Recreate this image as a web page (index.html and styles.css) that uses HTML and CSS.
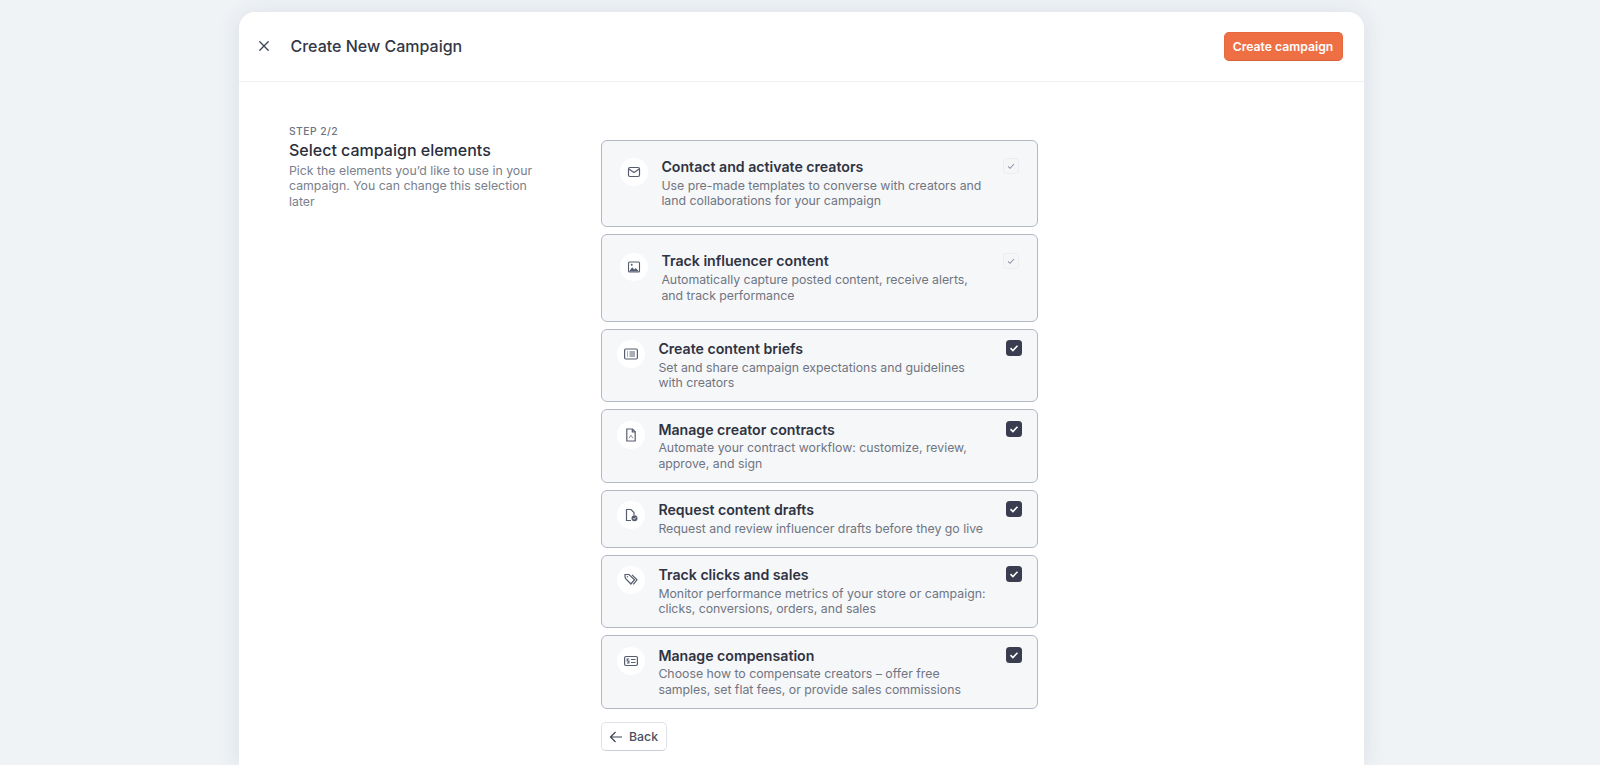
FILE: index.html
```html
<!DOCTYPE html>
<html lang="en">
<head>
<meta charset="utf-8">
<title>Create New Campaign</title>
<link rel="stylesheet" href="styles.css">
</head>
<body>
<main class="modal">
  <header class="modal-head">
    <button class="close" aria-label="Close">
      <svg viewBox="0 0 12 12" width="12" height="12"><path d="M1.800 1.800l8.400 8.400M10.200 1.800l-8.400 8.400" fill="none" stroke="#3b4252" stroke-width="1.300" stroke-linecap="round"/></svg>
    </button>
    <h1 class="modal-title">Create New Campaign</h1>
    <button class="primary">Create campaign</button>
  </header>
  <div class="modal-body">
    <aside class="intro">
      <div class="step">STEP 2/2</div>
      <h2 class="intro-title">Select campaign elements</h2>
      <p class="intro-text">Pick the elements you’d like to use in your campaign. You can change this selection later</p>
    </aside>
    <section class="elements">
      <article class="card card-large">
        <span class="icon"><svg viewBox="0 0 14 14"><rect x="1.500" y="2.500" width="11" height="9" rx="1.500" class="ln"/><path d="M1.800 4l5.200 3.600L12.200 4" class="ln"/></svg></span>
        <div class="copy"><h3>Contact and activate creators</h3><p>Use pre-made templates to converse with creators and land collaborations for your campaign</p></div>
        <span class="check check-locked"><svg viewBox="0 0 12 12"><path d="M3 6.300l2.100 2L9 4" fill="none" stroke="#8f95a3" stroke-width="1.100"/></svg></span>
      </article>
      <article class="card card-large">
        <span class="icon"><svg viewBox="0 0 14 14"><rect x="1.500" y="2" width="11" height="10" rx="1" fill="#fff" stroke="#565d6e" stroke-width="1.100"/><path d="M2 11.500l3.200-4.200 2 2.200 1.500-1.500 3.300 3.500z" fill="#565d6e"/><circle cx="4.700" cy="4.800" r="1" fill="#565d6e"/></svg></span>
        <div class="copy"><h3>Track influencer content</h3><p>Automatically capture posted content, receive alerts, and track performance</p></div>
        <span class="check check-locked"><svg viewBox="0 0 12 12"><path d="M3 6.300l2.100 2L9 4" fill="none" stroke="#8f95a3" stroke-width="1.100"/></svg></span>
      </article>
      <article class="card">
        <span class="icon"><svg viewBox="0 0 14 14"><rect x="0.600" y="2" width="12.800" height="10" rx="1.200" class="ln"/><path d="M3 5h1M5.500 5H11M3 7h1M5.500 7H11M3 9h1M5.500 9H11" class="ln"/></svg></span>
        <div class="copy"><h3>Create content briefs</h3><p>Set and share campaign expectations and guidelines with creators</p></div>
        <span class="check"><svg viewBox="0 0 12 12"><path d="M2.500 6.200l2.400 2.300L9.500 3.700" fill="none" stroke="#fff" stroke-width="1.600"/></svg></span>
      </article>
      <article class="card">
        <span class="icon"><svg viewBox="0 0 14 14"><path d="M2.800 1h5.700L11.200 3.700V13H2.800z" class="ln"/><path d="M8.300 1v2.900H11.200" class="ln"/><path d="M4.800 10.300c1-.2 1.300-3 2.100-3s.7 2.400 2.300 2.600" class="ln-thin"/></svg></span>
        <div class="copy"><h3>Manage creator contracts</h3><p>Automate your contract workflow: customize, review, approve, and sign</p></div>
        <span class="check"><svg viewBox="0 0 12 12"><path d="M2.500 6.200l2.400 2.300L9.500 3.700" fill="none" stroke="#fff" stroke-width="1.600"/></svg></span>
      </article>
      <article class="card">
        <span class="icon"><svg viewBox="0 0 14 14"><path d="M7 12.500H2.500V1.500H7L10 4.500V7" class="ln"/><circle cx="10.500" cy="10.300" r="3" fill="#565d6e"/><path d="M9.200 10.300l1 1 1.700-1.900" fill="none" stroke="#fff" stroke-width=".8"/></svg></span>
        <div class="copy"><h3>Request content drafts</h3><p>Request and review influencer drafts before they go live</p></div>
        <span class="check"><svg viewBox="0 0 12 12"><path d="M2.500 6.200l2.400 2.300L9.500 3.700" fill="none" stroke="#fff" stroke-width="1.600"/></svg></span>
      </article>
      <article class="card">
        <span class="icon"><svg viewBox="0 0 14 14"><path d="M1 3.600V1.500h4l5.500 5.200-3.600 4.300L1.500 5.500z" class="ln"/><path d="M8 1.800l5 5-3.700 4.600" class="ln"/><circle cx="3.500" cy="3.700" r=".7" fill="#565d6e"/></svg></span>
        <div class="copy"><h3>Track clicks and sales</h3><p>Monitor performance metrics of your store or campaign: clicks, conversions, orders, and sales</p></div>
        <span class="check"><svg viewBox="0 0 12 12"><path d="M2.500 6.200l2.400 2.300L9.500 3.700" fill="none" stroke="#fff" stroke-width="1.600"/></svg></span>
      </article>
      <article class="card">
        <span class="icon"><svg viewBox="0 0 14 14"><rect x="0.600" y="2.500" width="12.800" height="9" rx="1.400" class="ln"/><path d="M5.200 5h-2v2h1.700v2H2.900M7 5.500h4.500M7 8.500h4.500" class="ln"/></svg></span>
        <div class="copy"><h3>Manage compensation</h3><p>Choose how to compensate creators – offer free samples, set flat fees, or provide sales commissions</p></div>
        <span class="check"><svg viewBox="0 0 12 12"><path d="M2.500 6.200l2.400 2.300L9.500 3.700" fill="none" stroke="#fff" stroke-width="1.600"/></svg></span>
      </article>
      <button class="back">
        <svg viewBox="0 0 14 14" width="14" height="14"><path d="M13 7H1.500M6.500 2L1.500 7l5 5" fill="none" stroke="#3b4252" stroke-width="1.200"/></svg>
        Back
      </button>
    </section>
  </div>
</main>
</body>
</html>
```

FILE: styles.css
```css
* { box-sizing: border-box; }
html, body { height: 100%; }
body {
  margin: 0;
  height: 765px;
  overflow: hidden;
  background: #eff3f6;
  font-family: Inter, "Liberation Sans", sans-serif;
  color: #2f3342;
}
.modal {
  width: 1125px;
  height: 753px;
  margin: 11.500px 0 0 238.500px;
  background: #fff;
  border-radius: 16px 16px 0 0;
  box-shadow: 0 2px 24px rgba(40, 50, 80, .1);
}
.modal-head {
  display: flex;
  align-items: center;
  height: 70px;
  padding: 0 21px 0 19px;
  border-bottom: 1px solid #eef0f3;
}
.close {
  display: flex;
  padding: 0;
  border: 0;
  background: none;
  margin-right: 21px;
}
.modal-title {
  flex: 1;
  margin: 0;
  font-size: 16px;
  font-weight: 500;
  color: #333846;
}
.primary {
  height: 29px;
  width: 119px;
  padding: 0;
  border: 1px solid #e5683f;
  border-bottom-color: #d95f38;
  border-radius: 5px;
  background: #ef6f45;
  color: #fff;
  font: 600 12.200px Inter, "Liberation Sans", sans-serif;
}
.modal-body {
  display: flex;
  padding: 42px 0 0 50.500px;
}
.intro { width: 262px; margin-right: 50px; }
.step {
  font-size: 10.300px;
  font-weight: 500;
  letter-spacing: .45px;
  color: #6b7280;
  line-height: 14px;
}
.intro-title {
  margin: 2px 0 0;
  font-size: 16px;
  font-weight: 500;
  line-height: 20px;
  color: #2a2e3c;
}
.intro-text {
  margin: 3px 0 0;
  font-size: 12.300px;
  line-height: 15.900px;
  color: #7a808c;
}
.elements {
  width: 437px;
  margin-top: 16.300px;
  display: flex;
  flex-direction: column;
  align-items: flex-start;
  gap: 7.100px;
}
.card {
  width: 100%;
  display: flex;
  align-items: flex-start;
  padding: 10.500px 15px 10.200px;
  background: #f6f7f9;
  border: 1px solid #b3b7c4;
  border-radius: 6px;
}
.card-large { padding: 17.500px 18px; height: 87.400px; }
.icon {
  flex: none;
  width: 28px;
  height: 28px;
  margin-right: 13.400px;
  border-radius: 50%;
  background: #fff;
  display: flex;
  align-items: center;
  justify-content: center;
}
.icon svg { width: 14px; height: 14px; }
.ln { fill: none; stroke: #565d6e; stroke-width: 1.200; }
.ln-thin { fill: none; stroke: #565d6e; stroke-width: .8; }
.copy { flex: 1; min-width: 0; max-width: 330px; margin-top: -0.300px; }
.copy h3 {
  margin: 0 0 1.200px;
  font-size: 14.150px;
  font-weight: 600;
  line-height: 18.500px;
  color: #2f3342;
}
.copy p {
  margin: 0;
  font-size: 12.300px;
  line-height: 15.700px;
  color: #6f7582;
}
.check {
  flex: none;
  margin-left: auto;
  width: 16px;
  height: 16px;
  border-radius: 3.500px;
  background: #3a3c4f;
  display: flex;
  align-items: center;
  justify-content: center;
}
.check svg { width: 12px; height: 12px; }
.check-locked {
  background: #f5f6f8;
  border: 1px solid #ebedf0;
}
.back {
  margin-top: 6.500px;
  width: 66px;
  height: 29px;
  display: flex;
  align-items: center;
  gap: 6px;
  padding: 0 0 0 7px;
  background: #fff;
  border: 1px solid #dfe2e8;
  border-bottom-color: #c9cdd6;
  border-radius: 5px;
  color: #4a5060;
  font: 500 12.300px Inter, "Liberation Sans", sans-serif;
}
```
